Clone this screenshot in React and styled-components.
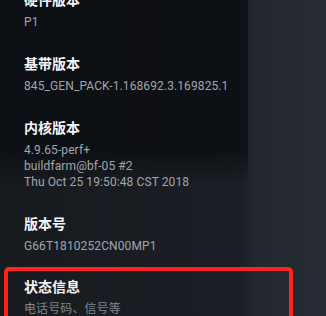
import React from 'react';
import styled, { createGlobalStyle } from 'styled-components';

const GlobalStyle = createGlobalStyle`
  html, body {
    margin: 0;
    padding: 0;
    width: 326px;
    height: 316px;
    overflow: hidden;
  }
  body {
    font-family: Roboto, 'Noto Sans CJK SC', sans-serif;
    background:
      linear-gradient(180deg, rgba(8, 10, 14, 0.7) 0, rgba(8, 10, 14, 0.7) 150px, rgba(8, 10, 14, 0) 185px) 0 0 / 248px 100% no-repeat,
      linear-gradient(90deg, #171b20 0, #1b1f25 240px, #23282e 256px, #272c32 326px);
  }
`;

const Screen = styled.div`
  width: 326px;
  height: 316px;
  overflow: hidden;
`;

const List = styled.div`
  display: flex;
  flex-direction: column;
  margin-top: -21px;
  padding-left: 4px;
`;

const Item = styled.div`
  display: flex;
  flex-direction: column;
  padding: 10px 0 13px 20px;
`;

const Highlight = styled(Item)`
  width: 289px;
  box-sizing: border-box;
  padding: 5px 0 13px 16px;
  border: 4px solid #ff2419;
  border-radius: 5px;
`;

const Title = styled.div`
  font-family: 'Noto Sans CJK SC', sans-serif;
  font-size: 14px;
  font-weight: 700;
  line-height: 20px;
  margin-bottom: 5px;
  color: #f4f5f6;
`;

const Value = styled.div`
  font-family: Roboto, 'Noto Sans CJK SC', sans-serif;
  font-size: 12px;
  line-height: 16px;
  letter-spacing: 0.1px;
  color: ${p => p.$dim ? '#80858b' : '#a2a6ab'};
  white-space: nowrap;
`;

const items = [
  { title: '硬件版本', values: ['P1'] },
  { title: '基带版本', values: ['845_GEN_PACK-1.168692.3.169825.1'] },
  { title: '内核版本', values: ['4.9.65-perf+', 'buildfarm@bf-05 #2', 'Thu Oct 25 19:50:48 CST 2018'] },
  { title: '版本号', values: ['G66T1810252CN00MP1'] },
];

export default function App() {
  return (
    <Screen>
      <GlobalStyle />
      <List>
        {items.map(item => (
          <Item key={item.title}>
            <Title>{item.title}</Title>
            {item.values.map(v => <Value key={v}>{v}</Value>)}
          </Item>
        ))}
        <Highlight>
          <Title>状态信息</Title>
          <Value $dim>电话号码、信号等</Value>
        </Highlight>
      </List>
    </Screen>
  );
}
